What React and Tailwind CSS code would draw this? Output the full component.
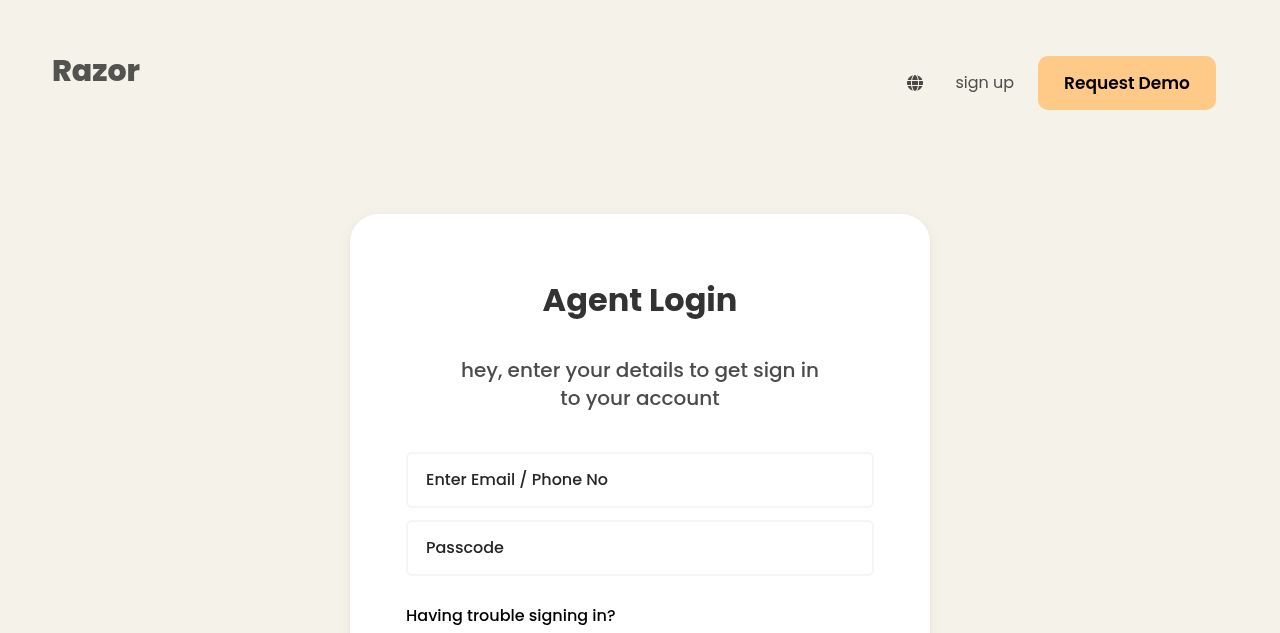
import { FaGlobe } from "react-icons/fa6";

function Field({ label }) {
  return (
    <div className="flex h-[56px] items-center rounded-md border-2 border-[#f5f5f5] bg-white pl-[18px] text-[16px] font-medium text-[#262626]">
      <span className="whitespace-nowrap">{label}</span>
    </div>
  );
}

export default function App() {
  return (
    <div className="h-[633px] overflow-hidden bg-[#f5f2e9]">
      <div className="h-full font-['Poppins',Inter,sans-serif] antialiased will-change-transform">
        <header className="flex h-[214px] items-start justify-between pt-14 pr-16 pl-[52px]">
          <h1 className="text-[30px] leading-[30px] font-extrabold text-[#535350]">Razor</h1>
          <nav className="flex h-[54px] items-center">
            <FaGlobe className="size-4 text-[#484844]" />
            <a className="ml-[32.5px] w-[58.5px] text-[16px] whitespace-nowrap text-[#4d4d4a]">sign up</a>
            <button className="ml-6 h-[54px] w-[178px] rounded-[10px] bg-[#ffc988] pt-px text-[17px] font-semibold whitespace-nowrap text-black">
              Request Demo
            </button>
          </nav>
        </header>
        <main className="mx-auto h-[700px] w-[580px] rounded-[28px] bg-white px-14 pt-16 shadow-[0_4px_14px_rgba(0,0,0,0.06),0_0_2px_rgba(0,0,0,0.06)]">
          <h2 className="text-center text-[32px] leading-[44px] font-bold text-[#333333]">Agent Login</h2>
          <p className="mt-[34px] text-center text-[20px] leading-[28px] font-medium text-[#4b4b4b]">
            hey, enter your details to get sign in
            <br />
            to your account
          </p>
          <div className="mt-10 flex flex-col gap-3">
            <Field label="Enter Email / Phone No" />
            <Field label="Passcode" />
          </div>
          <p className="mt-[27px] text-[16px] leading-[26px] font-medium text-black">Having trouble signing in?</p>
        </main>
      </div>
    </div>
  );
}
